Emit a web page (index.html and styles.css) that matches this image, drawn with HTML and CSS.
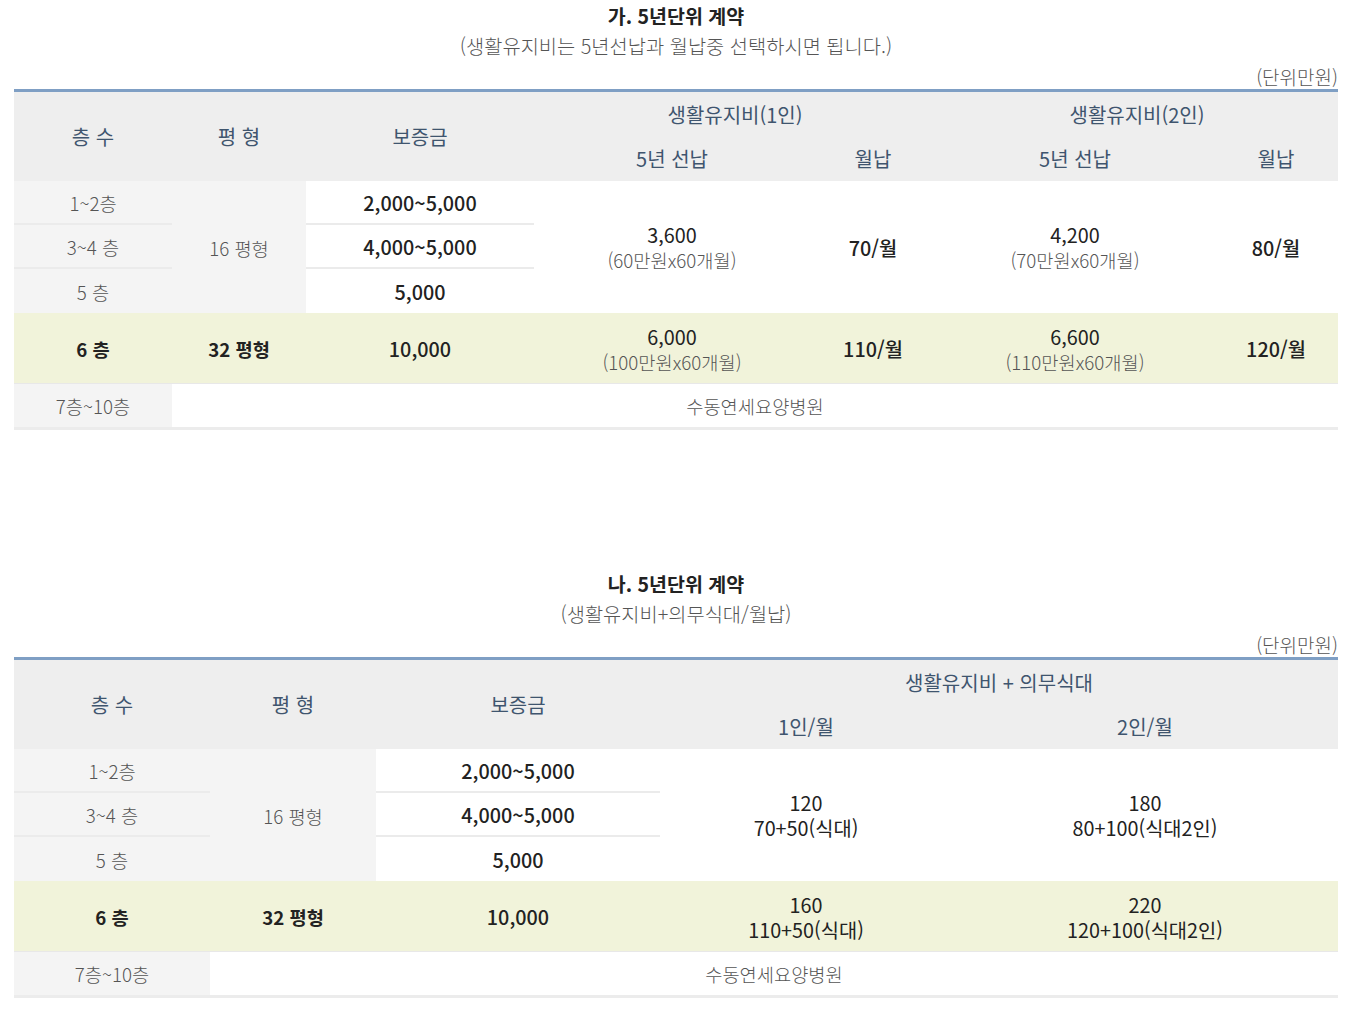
FILE: index.html
```html
<!DOCTYPE html>
<html lang="ko">
<head>
<meta charset="utf-8">
<title>5년단위 계약</title>
<link rel="stylesheet" href="styles.css">
</head>
<body>
<div class="page">
  <section class="block">
    <div class="caption">
      <p class="title">가. 5년단위 계약</p>
      <p class="sub">(생활유지비는 5년선납과 월납중 선택하시면 됩니다.)</p>
      <p class="unit">(단위만원)</p>
    </div>
    <table class="price t1">
      <colgroup>
        <col style="width:158px"><col style="width:134px"><col style="width:228px"><col style="width:276px"><col style="width:126px"><col style="width:278px"><col style="width:124px">
      </colgroup>
      <thead>
        <tr class="h1">
          <th rowspan="2">층 수</th>
          <th rowspan="2">평 형</th>
          <th rowspan="2">보증금</th>
          <th colspan="2">생활유지비(1인)</th>
          <th colspan="2">생활유지비(2인)</th>
        </tr>
        <tr class="h2">
          <th>5년 선납</th>
          <th>월납</th>
          <th>5년 선납</th>
          <th>월납</th>
        </tr>
      </thead>
      <tbody>
        <tr class="r">
          <td class="fl sep">1~2층</td>
          <td class="fl" rowspan="3">16 평형</td>
          <td class="dep sep">2,000~5,000</td>
          <td class="val" rowspan="3">3,600<span class="note">(60만원x60개월)</span></td>
          <td class="mon" rowspan="3">70/월</td>
          <td class="val" rowspan="3">4,200<span class="note">(70만원x60개월)</span></td>
          <td class="mon" rowspan="3">80/월</td>
        </tr>
        <tr class="r">
          <td class="fl sep">3~4 층</td>
          <td class="dep sep">4,000~5,000</td>
        </tr>
        <tr class="r">
          <td class="fl">5 층</td>
          <td class="dep">5,000</td>
        </tr>
        <tr class="hl">
          <td class="b">6 층</td>
          <td class="b">32 평형</td>
          <td class="m">10,000</td>
          <td class="val">6,000<span class="note">(100만원x60개월)</span></td>
          <td class="mon">110/월</td>
          <td class="val">6,600<span class="note">(110만원x60개월)</span></td>
          <td class="mon">120/월</td>
        </tr>
        <tr class="last">
          <td class="fl">7층~10층</td>
          <td class="lt" colspan="6">수동연세요양병원</td>
        </tr>
      </tbody>
    </table>
  </section>

  <section class="block second">
    <div class="caption">
      <p class="title">나. 5년단위 계약</p>
      <p class="sub">(생활유지비+의무식대/월납)</p>
      <p class="unit">(단위만원)</p>
    </div>
    <table class="price t2">
      <colgroup>
        <col style="width:196px"><col style="width:166px"><col style="width:284px"><col style="width:292px"><col style="width:386px">
      </colgroup>
      <thead>
        <tr class="h1">
          <th rowspan="2">층 수</th>
          <th rowspan="2">평 형</th>
          <th rowspan="2">보증금</th>
          <th colspan="2">생활유지비 + 의무식대</th>
        </tr>
        <tr class="h2">
          <th>1인/월</th>
          <th>2인/월</th>
        </tr>
      </thead>
      <tbody>
        <tr class="r">
          <td class="fl sep">1~2층</td>
          <td class="fl" rowspan="3">16 평형</td>
          <td class="dep sep">2,000~5,000</td>
          <td class="val" rowspan="3">120<span class="note dk">70+50(식대)</span></td>
          <td class="val" rowspan="3">180<span class="note dk">80+100(식대2인)</span></td>
        </tr>
        <tr class="r">
          <td class="fl sep">3~4 층</td>
          <td class="dep sep">4,000~5,000</td>
        </tr>
        <tr class="r">
          <td class="fl">5 층</td>
          <td class="dep">5,000</td>
        </tr>
        <tr class="hl">
          <td class="b">6 층</td>
          <td class="b">32 평형</td>
          <td class="m">10,000</td>
          <td class="val">160<span class="note dk">110+50(식대)</span></td>
          <td class="val">220<span class="note dk">120+100(식대2인)</span></td>
        </tr>
        <tr class="last">
          <td class="fl">7층~10층</td>
          <td class="lt" colspan="4">수동연세요양병원</td>
        </tr>
      </tbody>
    </table>
  </section>
</div>
</body>
</html>
```

FILE: styles.css
```css
html, body {
  margin: 0;
  padding: 0;
  background: #ffffff;
}
body {
  font-family: "Noto Sans CJK KR", "Noto Sans", sans-serif;
  color: #222222;
  padding-top: 1px;
}
.page {
  width: 1324px;
  margin-left: 14px;
}
.block.second {
  margin-top: 139px;
}
.caption p {
  margin: 0;
  line-height: 30px;
  height: 30px;
}
.caption .title {
  text-align: center;
  font-size: 19.5px;
  font-weight: 700;
  color: #222222;
}
.caption .sub {
  text-align: center;
  font-size: 19.8px;
  font-weight: 300;
  color: #555555;
}
.caption .unit {
  text-align: right;
  font-size: 19px;
  font-weight: 300;
  color: #555555;
  line-height: 31px;
  height: 28px;
}
.price {
  width: 1324px;
  table-layout: fixed;
  border-collapse: collapse;
  border-top: 3px solid #7f9fc4;
  border-bottom: 3px solid #ececec;
}
.price th {
  background: #eeeeee;
  color: #3f556e;
  font-size: 20px;
  font-weight: 400;
  padding: 0;
  text-align: center;
}
.price .h1 th { height: 44px; }
.price .h2 th { height: 45px; }
.price td {
  padding: 0;
  text-align: center;
  font-size: 19.8px;
  line-height: 25px;
  background: #ffffff;
}
.price .r td { height: 44px; }
.price .r .sep { border-bottom: 2px solid #ebebeb; }
.price .r .sep { height: 42px; }
.price td.fl {
  background: #f4f4f4;
  font-size: 18.7px;
  font-weight: 300;
  color: #555555;
}
.price td.dep {
  font-weight: 500;
  color: #222222;
}
.price td.val {
  font-weight: 400;
  color: #222222;
}
.price td .note {
  display: block;
  font-size: 18.7px;
  font-weight: 300;
  color: #555555;
}
.price td .note.dk {
  font-size: 19.8px;
  font-weight: 400;
  color: #222222;
}
.price td.mon {
  font-weight: 500;
  color: #222222;
}
.price .hl td {
  background: #f1f3da;
  height: 69px;
  border-top: 1px solid #f1f3da;
  border-bottom: 1px solid #e8e8e8;
}
.price .hl td.b {
  font-weight: 700;
  font-size: 18.7px;
}
.price .hl td.m {
  font-weight: 500;
}
.price .last td { height: 43px; }
.price td.lt {
  font-size: 18.7px;
  font-weight: 300;
  color: #555555;
}
```
